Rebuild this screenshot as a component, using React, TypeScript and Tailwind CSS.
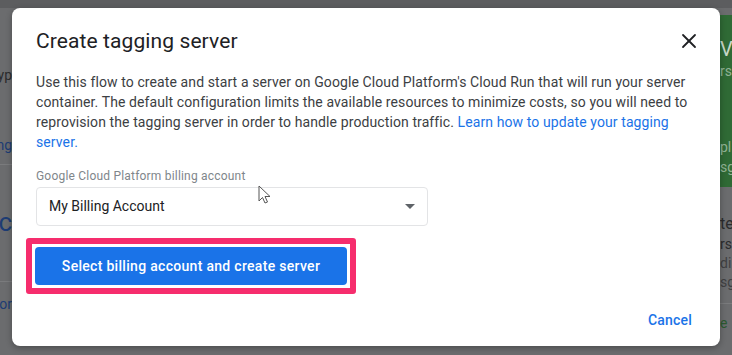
import { X } from 'lucide-react';

function Cursor() {
  return (
    <svg width="14" height="20" viewBox="0 0 14 20" className="absolute left-[258px] top-[185px]">
      <path d="M1 1 L1 16 L4.5 12.5 L7 18 L9.5 17 L7 11.5 L12 11.5 Z" fill="#ffffff" stroke="#555" strokeWidth="1" strokeLinejoin="round" />
    </svg>
  );
}

export default function App() {
  return (
    <div className="relative w-[732px] h-[355px] overflow-hidden bg-[#6b6c6e] font-['Roboto',sans-serif]">
      {/* dimmed page behind the dialog */}
      <div className="h-[8px] bg-[#5c5d5f]" />
      <div className="flex justify-between h-[347px]">
        <div className="w-[12px] overflow-hidden flex flex-col items-end text-[#2a2b2d]">
          <div className="h-[57px]" />
          <div className="whitespace-nowrap text-[14px] leading-[20px]">Typ</div>
          <div className="h-[38px] border-b border-[#7a7b7d]" />
          <div className="whitespace-nowrap text-[14px] leading-[20px] text-[#1d3c74] mt-[12px]">ng</div>
          <div className="h-[10px] w-full border-b border-[#7a7b7d]" />
          <div className="whitespace-nowrap text-[26px] leading-[32px] text-[#1d3c74] mt-[41px]">ic</div>
          <div className="h-[44px] w-full border-b border-[#7a7b7d]" />
          <div className="whitespace-nowrap text-[14px] leading-[20px] text-[#1d3c74] mt-[12px]">for</div>
        </div>
        <div className="w-[12px] overflow-hidden flex flex-col">
          <div className="h-[172px] mt-[7px] bg-[#2f6a35] text-[#8fb294] pt-[22px]">
            <div className="whitespace-nowrap text-[20px] leading-[24px] text-[#c7d8c9]">V</div>
            <div className="whitespace-nowrap text-[14px] leading-[20px]">rs</div>
            <div className="whitespace-nowrap text-[14px] leading-[20px] mt-[56px]">pl</div>
            <div className="whitespace-nowrap text-[14px] leading-[20px]">sg</div>
          </div>
          <div className="text-[#2a2b2d] pt-[27px]">
            <div className="whitespace-nowrap text-[16px] leading-[20px]">te</div>
            <div className="whitespace-nowrap text-[14px] leading-[20px]">rsi</div>
            <div className="whitespace-nowrap text-[14px] leading-[18px] text-[#3f4042]">di</div>
            <div className="whitespace-nowrap text-[14px] leading-[20px] text-[#3f4042]">sg</div>
            <div className="h-[12px] border-b border-[#7a7b7d]" />
            <div className="whitespace-nowrap text-[14px] leading-[20px] mt-[9px] text-[#2c5a30]">e</div>
          </div>
        </div>
      </div>

      {/* dialog */}
      <div className="absolute left-[12px] top-[8px] w-[708px] h-[338px] bg-white rounded-[8px] shadow-[0_2px_6px_rgba(0,0,0,0.3)] flex flex-col pl-[24px] pr-[28px] pt-[19px]">
        <div className="flex items-center justify-between">
          <h2 className="text-[21px] leading-[28px] text-[#202124] tracking-[0.1px]">Create tagging server</h2>
          <X size={24} strokeWidth={1.8} className="text-[#202124] -mr-[9px]" />
        </div>
        <p className="mt-[17px] text-[14px] leading-[20px] text-[#3c4043] tracking-[0.1px]">
          Use this flow to create and start a server on Google Cloud Platform's Cloud Run that will run your server
          container. The default configuration limits the available resources to minimize costs, so you will need to
          reprovision the tagging server in order to handle production traffic.{' '}
          <span className="text-[#1a73e8]">Learn how to update your tagging server.</span>
        </p>
        <div className="mt-[16px] text-[12px] leading-[16px] text-[#80868b] tracking-[0.2px]">Google Cloud Platform billing account</div>
        <div className="mt-[3px] w-[392px] h-[39px] border border-[#e3e4e6] rounded-[4px] flex items-center justify-between pl-[12px] pr-[12px]">
          <span className="text-[14px] text-[#202124]">My Billing Account</span>
          <svg width="10" height="5" viewBox="0 0 10 5">
            <path d="M0 0 L10 0 L5 5 Z" fill="#5f6368" />
          </svg>
        </div>
        <div className="mt-[12px] -ml-[10px] w-[330px] h-[56px] border-[6px] border-[#f62d6d] rounded-[3px] p-[3px]">
          <button className="w-full h-full bg-[#1a73e8] rounded-[4px] text-white text-[14px] font-medium tracking-[0.3px]">
            Select billing account and create server
          </button>
        </div>
        <div className="flex justify-end mt-[16px]">
          <span className="text-[14px] leading-[20px] font-medium text-[#1a73e8] tracking-[0.2px]">Cancel</span>
        </div>
      </div>
      <Cursor />
    </div>
  );
}
